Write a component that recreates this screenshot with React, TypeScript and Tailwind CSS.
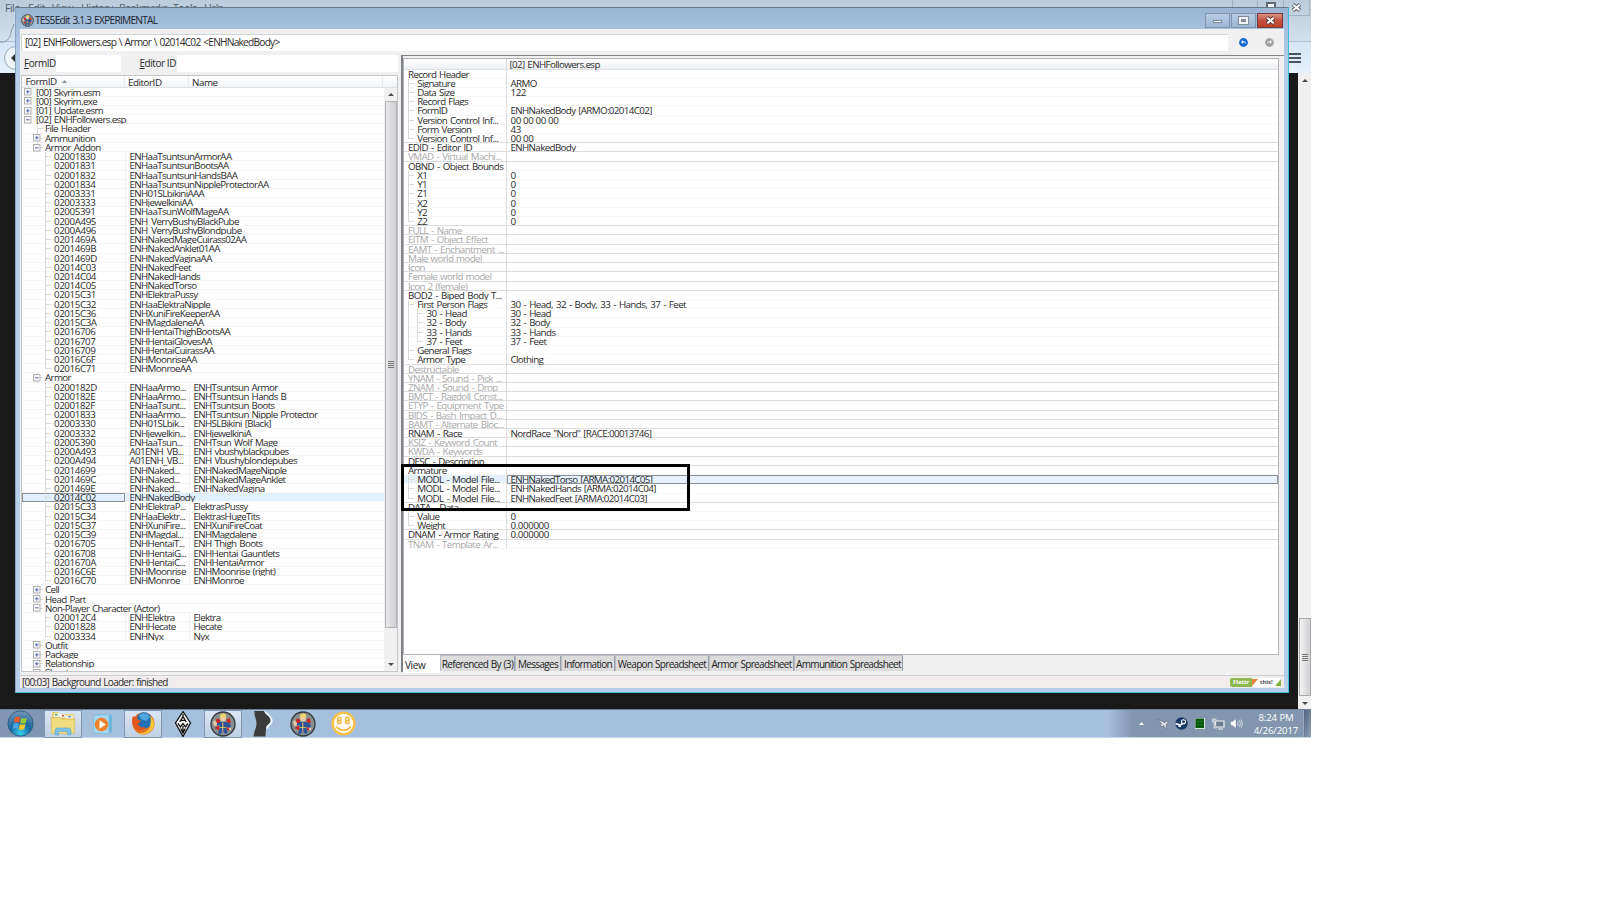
import type { ReactNode } from "react"

type TreeRow = {
  depth: number
  label: string
  box?: "plus" | "minus"
  editorId?: string
  name?: string
  last?: boolean
  selected?: boolean
}

type RecordRow = {
  depth: number
  label: string
  value?: string
  dim?: boolean
  rule?: boolean
  last?: boolean
  selected?: boolean
  // ancestor line keeps running to the left of this row
  outer?: boolean
}

const leaf = (
  label: string,
  editorId: string,
  name?: string,
  extra: Partial<TreeRow> = {},
): TreeRow => ({ depth: 2, label, editorId, name, ...extra })

const treeRows: TreeRow[] = [
  { depth: 0, label: "[00] Skyrim.esm", box: "plus" },
  { depth: 0, label: "[00] Skyrim.exe", box: "plus" },
  { depth: 0, label: "[01] Update.esm", box: "plus" },
  { depth: 0, label: "[02] ENHFollowers.esp", box: "minus" },
  { depth: 1, label: "File Header" },
  { depth: 1, label: "Ammunition", box: "plus" },
  { depth: 1, label: "Armor Addon", box: "minus" },
  leaf("02001830", "ENHaaTsuntsunArmorAA"),
  leaf("02001831", "ENHaaTsuntsunBootsAA"),
  leaf("02001832", "ENHaaTsuntsunHandsBAA"),
  leaf("02001834", "ENHaaTsuntsunNippleProtectorAA"),
  leaf("02003331", "ENH01SLbikiniAAA"),
  leaf("02003333", "ENHjewelkiniAA"),
  leaf("02005391", "ENHaaTsunWolfMageAA"),
  leaf("0200A495", "ENH_VerryBushyBlackPube"),
  leaf("0200A496", "ENH_VerryBushyBlondpube"),
  leaf("0201469A", "ENHNakedMageCuirass02AA"),
  leaf("0201469B", "ENHNakedAnklet01AA"),
  leaf("0201469D", "ENHNakedVaginaAA"),
  leaf("02014C03", "ENHNakedFeet"),
  leaf("02014C04", "ENHNakedHands"),
  leaf("02014C05", "ENHNakedTorso"),
  leaf("02015C31", "ENHElektraPussy"),
  leaf("02015C32", "ENHaaElektraNipple"),
  leaf("02015C36", "ENHXuniFireKeeperAA"),
  leaf("02015C3A", "ENHMagdaleneAA"),
  leaf("02016706", "ENHHentaiThighBootsAA"),
  leaf("02016707", "ENHHentaiGlovesAA"),
  leaf("02016709", "ENHHentaiCuirassAA"),
  leaf("02016C6F", "ENHMoonriseAA"),
  leaf("02016C71", "ENHMonroeAA", undefined, { last: true }),
  { depth: 1, label: "Armor", box: "minus" },
  leaf("0200182D", "ENHaaArmo...", "ENHTsuntsun Armor"),
  leaf("0200182E", "ENHaaArmo...", "ENHTsuntsun Hands B"),
  leaf("0200182F", "ENHaaTsunt...", "ENHTsuntsun Boots"),
  leaf("02001833", "ENHaaArmo...", "ENHTsuntsun Nipple Protector"),
  leaf("02003330", "ENH01SLbik...", "ENHSLBikini [Black]"),
  leaf("02003332", "ENHjewelkin...", "ENHjewelkiniA"),
  leaf("02005390", "ENHaaTsun...", "ENHTsun Wolf Mage"),
  leaf("0200A493", "A01ENH_VB...", "ENH vbushyblackpubes"),
  leaf("0200A494", "A01ENH_VB...", "ENH Vbushyblondepubes"),
  leaf("02014699", "ENHNaked...", "ENHNakedMageNipple"),
  leaf("0201469C", "ENHNaked...", "ENHNakedMageAnklet"),
  leaf("0201469E", "ENHNaked...", "ENHNakedVagina"),
  leaf("02014C02", "ENHNakedBody", undefined, { selected: true }),
  leaf("02015C33", "ENHElektraP...", "ElektrasPussy"),
  leaf("02015C34", "ENHaaElektr...", "ElektrasHugeTits"),
  leaf("02015C37", "ENHXuniFire...", "ENHXuniFireCoat"),
  leaf("02015C39", "ENHMagdal...", "ENHMagdalene"),
  leaf("02016705", "ENHHentaiT...", "ENH Thigh Boots"),
  leaf("02016708", "ENHHentaiG...", "ENHHentai Gauntlets"),
  leaf("0201670A", "ENHHentaiC...", "ENHHentaiArmor"),
  leaf("02016C6E", "ENHMoonrise", "ENHMoonrise (right)"),
  leaf("02016C70", "ENHMonroe", "ENHMonroe", { last: true }),
  { depth: 1, label: "Cell", box: "plus" },
  { depth: 1, label: "Head Part", box: "plus" },
  { depth: 1, label: "Non-Player Character (Actor)", box: "minus" },
  leaf("020012C4", "ENHElektra", "Elektra"),
  leaf("02001828", "ENHHecate", "Hecate"),
  leaf("02003334", "ENHNyx", "Nyx", { last: true }),
  { depth: 1, label: "Outfit", box: "plus" },
  { depth: 1, label: "Package", box: "plus" },
  { depth: 1, label: "Relationship", box: "plus" },
  { depth: 1, label: "Shout", box: "plus" },
]

const recordRows: RecordRow[] = [
  { depth: 0, label: "Record Header" },
  { depth: 1, label: "Signature", value: "ARMO" },
  { depth: 1, label: "Data Size", value: "122" },
  { depth: 1, label: "Record Flags" },
  { depth: 1, label: "FormID", value: "ENHNakedBody [ARMO:02014C02]" },
  { depth: 1, label: "Version Control Inf...", value: "00 00 00 00" },
  { depth: 1, label: "Form Version", value: "43" },
  { depth: 1, label: "Version Control Inf...", value: "00 00", last: true, rule: true },
  { depth: 0, label: "EDID - Editor ID", value: "ENHNakedBody", rule: true },
  { depth: 0, label: "VMAD - Virtual Machi...", dim: true, rule: true },
  { depth: 0, label: "OBND - Object Bounds" },
  { depth: 1, label: "X1", value: "0" },
  { depth: 1, label: "Y1", value: "0" },
  { depth: 1, label: "Z1", value: "0" },
  { depth: 1, label: "X2", value: "0" },
  { depth: 1, label: "Y2", value: "0" },
  { depth: 1, label: "Z2", value: "0", last: true, rule: true },
  { depth: 0, label: "FULL - Name", dim: true, rule: true },
  { depth: 0, label: "EITM - Object Effect", dim: true, rule: true },
  { depth: 0, label: "EAMT - Enchantment ...", dim: true, rule: true },
  { depth: 0, label: "Male world model", dim: true, rule: true },
  { depth: 0, label: "Icon", dim: true, rule: true },
  { depth: 0, label: "Female world model", dim: true, rule: true },
  { depth: 0, label: "Icon 2 (female)", dim: true, rule: true },
  { depth: 0, label: "BOD2 - Biped Body T..." },
  { depth: 1, label: "First Person Flags", value: "30 - Head, 32 - Body, 33 - Hands, 37 - Feet" },
  { depth: 2, label: "30 - Head", value: "30 - Head", outer: true },
  { depth: 2, label: "32 - Body", value: "32 - Body", outer: true },
  { depth: 2, label: "33 - Hands", value: "33 - Hands", outer: true },
  { depth: 2, label: "37 - Feet", value: "37 - Feet", outer: true, last: true },
  { depth: 1, label: "General Flags" },
  { depth: 1, label: "Armor Type", value: "Clothing", last: true, rule: true },
  { depth: 0, label: "Destructable", dim: true, rule: true },
  { depth: 0, label: "YNAM - Sound - Pick ...", dim: true, rule: true },
  { depth: 0, label: "ZNAM - Sound - Drop", dim: true, rule: true },
  { depth: 0, label: "BMCT - Ragdoll Const...", dim: true, rule: true },
  { depth: 0, label: "ETYP - Equipment Type", dim: true, rule: true },
  { depth: 0, label: "BIDS - Bash Impact D...", dim: true, rule: true },
  { depth: 0, label: "BAMT - Alternate Bloc...", dim: true, rule: true },
  { depth: 0, label: "RNAM - Race", value: 'NordRace "Nord" [RACE:00013746]', rule: true },
  { depth: 0, label: "KSIZ - Keyword Count", dim: true, rule: true },
  { depth: 0, label: "KWDA - Keywords", dim: true, rule: true },
  { depth: 0, label: "DESC - Description", rule: true },
  { depth: 0, label: "Armature" },
  { depth: 1, label: "MODL - Model File...", value: "ENHNakedTorso [ARMA:02014C05]", selected: true },
  { depth: 1, label: "MODL - Model File...", value: "ENHNakedHands [ARMA:02014C04]" },
  { depth: 1, label: "MODL - Model File...", value: "ENHNakedFeet [ARMA:02014C03]", last: true, rule: true },
  { depth: 0, label: "DATA - Data" },
  { depth: 1, label: "Value", value: "0" },
  { depth: 1, label: "Weight", value: "0.000000", last: true, rule: true },
  { depth: 0, label: "DNAM - Armor Rating", value: "0.000000", rule: true },
  { depth: 0, label: "TNAM - Template Ar...", dim: true },
]

const tabs = [
  { label: "Referenced By (3)", width: "w-[75px]" },
  { label: "Messages", width: "w-[46px]" },
  { label: "Information", width: "w-[54px]" },
  { label: "Weapon Spreadsheet", width: "w-[94px]" },
  { label: "Armor Spreadsheet", width: "w-[85px]" },
  { label: "Ammunition Spreadsheet", width: "w-[109px]" },
]

// Numbers sit wider than words, dashes need a little air around them
function CellText({ text }: { text: string }) {
  let spacing = "tracking-[-0.640px] [word-spacing:0.9px]"
  if (/^[0-9A-F. ]+$/.test(text)) spacing = "tracking-[-0.42px]"
  else if (text.includes(" - ")) spacing = "tracking-[-0.6px] [word-spacing:1.1px]"
  return <span className={`whitespace-pre ${spacing}`}>{text}</span>
}

function Elbow({ last }: { last?: boolean }) {
  return (
    <span className="relative block h-full w-[9.2px] shrink-0">
      <span
        className={`absolute top-0 left-0 w-px bg-[#d9d9d9] ${last ? "h-[5px]" : "h-full"}`}
      />
      <span className="absolute top-[4px] left-0 h-px w-[6px] bg-[#d9d9d9]" />
    </span>
  )
}

function ExpandBox({ kind }: { kind: "plus" | "minus" }) {
  return (
    <svg className="relative block h-[8px] w-[8px] shrink-0" viewBox="0 0 8 8">
      <rect x="0.5" y="0.5" width="6.5" height="6.5" fill="#f8f8f8" stroke="#b0b0b0" />
      <path d="M2 3.8h3.6" stroke="#5a6db2" />
      {kind === "plus" && <path d="M3.8 2v3.6" stroke="#5a6db2" />}
    </svg>
  )
}

function TreeLine({ row }: { row: TreeRow }) {
  return (
    <div
      className={`flex h-[9.225px] shrink-0 overflow-hidden leading-[9px] shadow-[inset_0_-1px_0_#f6f6f6] ${row.selected ? "bg-[#e2f0fd]" : ""}`}
    >
      <div
        className={`flex h-full w-[103px] shrink-0 pl-[2px] ${row.selected ? "outline-1 -outline-offset-1 outline-[#8a8f98]" : ""}`}
      >
        {row.depth === 0 && (
          <span className="flex h-full w-[12px] shrink-0 items-center">
            <ExpandBox kind={row.box ?? "plus"} />
          </span>
        )}
        {row.depth === 1 && (
          <span className="relative flex h-full w-[21px] shrink-0 items-center pl-[9px]">
            <span className="absolute top-0 left-[13px] h-full w-px bg-[#dedede]" />
            <span className="absolute top-[4px] left-[13px] h-px w-[6px] bg-[#d9d9d9]" />
            {row.box && <ExpandBox kind={row.box} />}
          </span>
        )}
        {row.depth === 2 && (
          <span className="flex h-full w-[30px] shrink-0">
            <span className="ml-[13px] h-full w-px bg-[#dedede]" />
            <span className="ml-[8px] flex h-full">
              <Elbow last={row.last} />
            </span>
          </span>
        )}
        <CellText text={row.label} />
      </div>
      {row.editorId && (
        <div className="w-[64px] shrink-0 border-l border-[#f1f1f1] pl-[3.5px] whitespace-nowrap">
          <CellText text={row.editorId} />
        </div>
      )}
      {row.name && (
        <div className="border-l border-[#f1f1f1] pl-[3.5px] whitespace-nowrap">
          <CellText text={row.name} />
        </div>
      )}
    </div>
  )
}

function RecordLine({ row }: { row: RecordRow }) {
  return (
    <div
      className={`flex h-[9.22px] shrink-0 overflow-hidden leading-[9px] ${row.rule ? "shadow-[inset_0_-1px_0_#dcdcdc]" : "shadow-[inset_0_-1px_0_#f8f8f8]"} ${row.dim ? "text-[#a9a9a9]" : ""} ${row.selected ? "bg-[#e6f1fc]" : ""}`}
    >
      <div className="flex h-full w-[103px] shrink-0 overflow-hidden border-r border-[#dedede] pl-[4px] whitespace-nowrap">
        {row.outer && <span className="mr-[8.2px] h-full w-px shrink-0 bg-[#d9d9d9]" />}
        {row.depth > 0 && <Elbow last={row.last} />}
        <CellText text={row.label} />
      </div>
      <div
        className={`flex-1 pl-[3.5px] whitespace-nowrap ${row.selected ? "outline-1 -outline-offset-1 outline-[#8a8f98]" : ""}`}
      >
        {row.value && <CellText text={row.value} />}
      </div>
    </div>
  )
}

function Grip() {
  return (
    <span className="flex flex-col gap-px">
      <span className="h-px w-[6px] bg-[#777]" />
      <span className="h-px w-[6px] bg-[#777]" />
      <span className="h-px w-[6px] bg-[#777]" />
      <span className="h-px w-[6px] bg-[#777]" />
    </span>
  )
}

function Arrow({ up }: { up?: boolean }) {
  return (
    <svg className="h-[3px] w-[6px]" viewBox="0 0 6 3">
      <path d={up ? "M0 3 3 0 6 3Z" : "M0 0h6L3 3Z"} fill="#4c4c4c" />
    </svg>
  )
}

function VaultIcon({ className }: { className: string }) {
  return (
    <svg className={className} viewBox="0 0 26 26">
      <circle cx="13" cy="13" r="12" fill="#878e90" stroke="#33393b" strokeWidth="1.3" />
      <path d="M6.500 7.500l3.500 1v4.500l-4-.5zM19.500 7l-3 1.500 1 4 3.500-1zM4.500 17l4.500-2.500.5 5zM21.500 17.500l-4-3-.5 5.500z" fill="#d0221d" />
      <path d="M10 11h6l4 1.500 1 4-2 .8-1.800-2.300-.9 1.500 1.200 6h-3l-1.700-4-2 4.500H8l2-7-.5-2.500-3 1.200-.8-2z" fill="#2a559c" />
      <path d="M12.800 11.500v8M10.200 16.500h5.300" stroke="#e8c552" strokeWidth="1" />
      <path d="M3 11l1.600-2 1.300 2.200 1.200.3-.2 3-2.700.5z" fill="#e9c9a0" />
      <circle cx="13" cy="7.600" r="2.900" fill="#ecca9f" />
      <path d="M9.800 6.800C9.400 3.800 11.500 2.300 13.600 2.600c2.200.1 3.200 1.900 2.500 3.800-1.800-.9-4.200-.9-6.300.4z" fill="#ecd768" />
      <circle cx="20" cy="17.800" r="1.300" fill="#e9c9a0" />
    </svg>
  )
}

function TaskButton({ children, active }: { children: ReactNode; active?: boolean }) {
  return (
    <div
      className={`flex h-[28px] w-[38px] shrink-0 items-center justify-center ${active ? "border border-[#8297b2] bg-linear-to-b from-[#dbe6f3] to-[#bfd0e5]" : ""}`}
    >
      {children}
    </div>
  )
}

function StartOrb() {
  return (
    <svg className="h-[27px] w-[27px]" viewBox="0 0 27 27">
      <defs>
        <radialGradient id="orb" cx="0.5" cy="0.9" r="0.85">
          <stop offset="0" stopColor="#35d2ef" />
          <stop offset="0.5" stopColor="#17679c" />
          <stop offset="1" stopColor="#6d93b4" />
        </radialGradient>
      </defs>
      <circle cx="13.5" cy="13.5" r="12.6" fill="url(#orb)" stroke="#265577" strokeWidth="0.8" />
      <path d="M8 7.500c2-1.200 3.800-1 5.300-.2l-1.200 5.400c-1.700-.9-3.500-.9-5.300.1z" fill="#ee5a26" />
      <path d="M14.300 7.700c1.800.9 3.600.9 5.700 0l-1.300 5.300c-2 .9-3.800.8-5.600-.1z" fill="#9bc93c" />
      <path d="M6.600 13.800c1.800-1 3.500-1 5.300-.2l-1.200 5.200c-1.700-.8-3.500-.8-5.200.1z" fill="#4aa5e4" />
      <path d="M12.900 14c1.800.9 3.600.9 5.600.1l-1.300 5.200c-1.900.9-3.700.8-5.500-.1z" fill="#fcc52e" />
    </svg>
  )
}

function FolderIcon() {
  return (
    <svg className="h-[25px] w-[26px]" viewBox="0 0 26 25">
      <path d="M2 4V2q0-1 1-1h5l1 2h14q1 0 1 1v17H2z" fill="#e9cf75" />
      <path d="M4 2.500h7v4H4z" fill="#f4f6ee" />
      <path d="M5 3h2.500v1.500H5z" fill="#49a35c" />
      <path d="M10 3.500h6v3h-6z" fill="#f4f6ee" />
      <path d="M12 4h2v1.500h-2z" fill="#d8473c" />
      <path d="M16 4.500h7v3h-7z" fill="#f4f6ee" />
      <path d="M18 5h3v1.300h-3z" fill="#4a8fd0" />
      <path d="M1 6.500h9l2 1.500h13l-.6 14.500H1.600z" fill="#f2dc80" stroke="#d0b052" strokeWidth="0.6" />
      <path d="M5 24v-4q0-3 2.500-3h11q2.500 0 2.500 3v4h-3.500v-3.500h-9V24z" fill="#7cc2e8" stroke="#4f9cca" strokeWidth="0.5" />
    </svg>
  )
}

function PlayerIcon() {
  return (
    <svg className="h-[22px] w-[22px]" viewBox="0 0 22 22">
      <path d="M5 1l15 1v17l-4 2z" fill="#6fb7dc" />
      <path d="M1.500 2.500 17 1v20l-15.500-1z" fill="#a4d6ef" stroke="#75b6d8" strokeWidth="0.7" />
      <circle cx="9.500" cy="11.500" r="6.700" fill="#f0802a" />
      <path d="M7.500 7.300l6.300 4.200-6.300 4.200z" fill="#fff" />
    </svg>
  )
}

function FirefoxIcon() {
  return (
    <svg className="h-[25px] w-[25px]" viewBox="0 0 25 25">
      <circle cx="12.5" cy="12.5" r="11" fill="#e8711c" />
      <circle cx="13" cy="9.500" r="8.300" fill="#2470b5" />
      <path d="M8 4c4-3 9-2 11 2l-4 4-5-2z" fill="#51a7dc" />
      <path d="M2 5l2 1 3-1-1 3 4 2-3 3c1 3 4 4 7 3-1 4-6 5-9 2-4-3-5-8-3-13z" fill="#e2571c" />
      <path d="M19 5c5 4 6 11 1 15-4 4-10 4-13 2 6 1 11-2 12-7 1-4 1-7 0-10z" fill="#f6c43b" />
    </svg>
  )
}

function DiamondIcon() {
  return (
    <svg className="h-[26px] w-[18px]" viewBox="0 0 18 26">
      <path d="M9 .5 16.500 12 9 25.500 1.500 12z" fill="#f4f4f4" stroke="#111" strokeWidth="1.300" />
      <path
        d="M9 3v2.500L5.800 11M9 5.500l3.200 5.500M7 9.300h4M4 12.500l2.500 3.500L9 12.500l2.500 3.500 2.500-3.500M6.700 17.500 9 22l2.300-4.500M9 15v6"
        fill="none"
        stroke="#111"
        strokeWidth="1.300"
      />
    </svg>
  )
}

function SilhouetteIcon() {
  return (
    <svg className="h-[26px] w-[24px]" viewBox="0 0 24 26">
      <path d="M13 .5C15 3 20 5 20.500 9.500c.5 4-4 3.500-4.500 8" fill="none" stroke="#f4f8fc" strokeWidth="2.200" />
      <path d="M3.500 0H13c1 4 6.500 5 6.500 9.500 0 3.500-4 4-4.500 7.500l-.5 8.500H2.500C3 20 5.500 17 5.500 12.500 5.500 8 3 5 3.500 0z" fill="#3b3b3b" />
    </svg>
  )
}

function SmileIcon() {
  return (
    <svg className="h-[25px] w-[25px]" viewBox="0 0 25 25">
      <circle cx="12.5" cy="12.5" r="10.900" fill="#fffdf4" stroke="#f9c044" strokeWidth="2.400" />
      <g fill="none" stroke="#f4b63a" strokeWidth="1.300">
        <rect x="6.500" y="6.500" width="3.600" height="3" rx="1" />
        <rect x="6.500" y="9.500" width="3.600" height="3" rx="1" />
        <rect x="14.500" y="6.500" width="3.600" height="3" rx="1" />
        <rect x="14.500" y="9.500" width="3.600" height="3" rx="1" />
        <path d="M5.500 15.500c3 5 11 5 14 0" strokeWidth="1.700" />
      </g>
    </svg>
  )
}

function Tray() {
  return (
    <div className="flex h-full w-[203px] items-center bg-linear-to-r from-[#a6bfdc] via-[#8396b0] via-12% to-[#8396b0]">
      <svg className="ml-[31px] h-[3px] w-[5px]" viewBox="0 0 5 3">
        <path d="M0 3 2.500 0 5 3Z" fill="#fff" />
      </svg>
      <svg className="ml-[13px] h-[12px] w-[12px]" viewBox="0 0 12 12">
        <path d="M.5 1.500 4.500 3 7 4.500 10 3.500l1.500 1-2.500 2 1 4-1.500-.5-2-2.500-2.500 1.500-.5-1.500L4.500 5.500z" fill="#dfe1e3" stroke="#5f656d" strokeWidth="0.600" />
      </svg>
      <svg className="ml-[6px] h-[13px] w-[13px]" viewBox="0 0 13 13">
        <circle cx="6.500" cy="6.500" r="6.200" fill="#173a68" />
        <circle cx="8.500" cy="4.800" r="2" fill="#173a68" stroke="#fff" strokeWidth="1.100" />
        <path d="M.5 6.500 5 8l3-1.500" fill="none" stroke="#fff" strokeWidth="1.800" />
        <circle cx="4.700" cy="8.700" r="1.500" fill="#dfe7f0" />
      </svg>
      <svg className="ml-[7px] h-[11px] w-[10px]" viewBox="0 0 10 11">
        <path d="M0 0h10v11H0z" fill="#d8e4d8" />
        <path d="M.5 .5h8.500v9.500H.5z" fill="#0a4d10" />
        <path d="M.5 3.500H9M.5 6.800H9M3.300.5v9.500M6.200.5v9.500" stroke="#12801c" strokeWidth="0.700" />
      </svg>
      <svg className="ml-[7px] h-[12px] w-[13px]" viewBox="0 0 13 12">
        <path d="M3.500 3h8.500v6H3.500zM6 11h5" fill="#6f8092" stroke="#eef1f4" strokeWidth="1.200" />
        <path d="M.5 1h3.500v3H.5zM2 4v6h3" fill="#b7c0c9" stroke="#e3e7eb" strokeWidth="0.700" />
      </svg>
      <svg className="ml-[5px] h-[11px] w-[13px]" viewBox="0 0 13 11">
        <path d="M.5 3.500h2L6 .5v10L2.500 7.500h-2z" fill="#fff" stroke="#667" strokeWidth="0.400" />
        <path d="M7.500 3.500q1.500 2 0 4M9.300 2.200q2.500 3.300 0 6.600M11 1.500q3 4 0 8" fill="none" stroke="#e6ebf1" strokeWidth="0.800" />
      </svg>
      <div className="ml-[10px] w-[46px] pt-px text-center text-[9.6px] leading-[13.500px] tracking-[-0.1px] whitespace-nowrap text-white">
        <div>8:24 PM</div>
        <div>4/26/2017</div>
      </div>
      <div className="ml-auto h-full w-[8px] border-l border-[#9aaabf] bg-linear-to-br from-[#4f637c] to-[#8fa3bd]" />
    </div>
  )
}

function Taskbar() {
  return (
    <div className="flex h-[29px] shrink-0 items-stretch border-t border-b border-t-[#6f7f93] border-b-[#c6d6e9] bg-[#a6bfdc]">
      <div className="flex w-[44px] items-center justify-center bg-[#8196b2] pr-[3px]">
        <StartOrb />
      </div>
      <div className="flex items-center gap-[2px]">
        <TaskButton active><FolderIcon /></TaskButton>
        <TaskButton><PlayerIcon /></TaskButton>
        <TaskButton active><FirefoxIcon /></TaskButton>
        <TaskButton><DiamondIcon /></TaskButton>
        <TaskButton active><VaultIcon className="h-[26px] w-[26px]" /></TaskButton>
        <TaskButton><SilhouetteIcon /></TaskButton>
        <TaskButton><VaultIcon className="h-[26px] w-[26px]" /></TaskButton>
        <TaskButton><SmileIcon /></TaskButton>
      </div>
      <div className="ml-auto">
        <Tray />
      </div>
    </div>
  )
}

function Browser() {
  return (
    <div className="flex h-[709px] flex-col">
      <div className="flex h-[41px] shrink-0 items-start justify-between bg-linear-to-b from-[#bccbd9] to-[#d3e0ee] pl-[5px] text-[10.500px] leading-[16px] tracking-[-0.5px] text-[#525d68]">
        <div className="flex">
          <span className="w-[23px]">File</span>
          <span className="w-[24px]">Edit</span>
          <span className="w-[29px]">View</span>
          <span className="w-[38px]">History</span>
          <span className="w-[54px] tracking-[-0.8px]">Bookmarks</span>
          <span className="w-[31px]">Tools</span>
          <span className="tracking-[-0.9px]">Help</span>
        </div>
        <div className="mr-px flex h-[16px] border border-t-0 border-[#a3b1c0]">
          <span className="w-[25px] border-r border-[#a3b1c0]" />
          <span className="w-[26px] border-r border-[#a3b1c0] pt-[2px] pl-[8px]">
            <span className="block h-[9px] w-[10px] border-2 border-[#606a74] bg-white" />
          </span>
          <span className="flex w-[25px] items-center justify-center">
            <CloseGlyph dark />
          </span>
        </div>
      </div>
      <div className="flex h-[32px] shrink-0 items-center justify-between border-t border-[#b4c3d2] bg-linear-to-b from-[#d6e6f7] to-[#e6f1fb]">
        <svg className="h-[32px] w-[15px] overflow-visible" viewBox="0 0 15 32">
          <path d="M0 0C6 1 10-3 11-10l3-8" fill="none" stroke="#8797a6" />
          <circle cx="16" cy="16" r="11.500" fill="#edf3f9" stroke="#98a8b8" />
          <path d="M11 16l4-4v8z" fill="#333" />
        </svg>
        <div className="mr-[10px] flex flex-col gap-[2px]">
          <span className="h-[2px] w-[13px] bg-[#4c5661]" />
          <span className="h-[2px] w-[13px] bg-[#4c5661]" />
          <span className="h-[2px] w-[13px] bg-[#4c5661]" />
        </div>
      </div>
      <div className="flex flex-1 justify-end bg-[#191919]">
        <div className="flex w-[13px] flex-col items-center bg-[#f0f0f0] pt-[6px] pb-[4px]">
          <Arrow up />
          <div className="mt-auto mb-[6px] flex h-[78px] w-[12px] items-center justify-center border border-[#a9a9a9] bg-linear-to-r from-[#f4f4f4] to-[#cfcfd3]">
            <Grip />
          </div>
          <Arrow />
        </div>
      </div>
    </div>
  )
}

function CloseGlyph({ dark }: { dark?: boolean }) {
  return (
    <svg className="h-[9px] w-[11px]" viewBox="0 0 11 9">
      <path d="M2 1.500l7 6M9 1.500l-7 6" stroke={dark ? "#59636e" : "#5b3a38"} strokeWidth="3.800" />
      <path d="M2.300 1.800l6.400 5.400M8.700 1.800l-6.400 5.400" stroke="#fff" strokeWidth="2" />
    </svg>
  )
}

function TitleBar() {
  return (
    <div className="flex h-[21px] shrink-0 items-start justify-between pr-[1px]">
      <div className="flex items-center pt-[5px] pl-px text-[#1c2530]">
        <VaultIcon className="h-[13px] w-[13px]" />
        <span className="ml-px text-[10.200px] leading-[15px] tracking-[-0.760px] [word-spacing:0.8px]">
          TES5Edit 3.1.3 EXPERIMENTAL
        </span>
      </div>
      <div className="mt-[5px] flex h-[15px] gap-px">
        <span className="flex w-[25px] items-center justify-center border border-[#7f94b0] bg-linear-to-b from-[#b9cce2] to-[#9db6d4]">
          <span className="mt-[2px] h-[3px] w-[9px] border border-[#7f8b99] bg-white" />
        </span>
        <span className="flex w-[25px] items-center justify-center border border-[#7f94b0] bg-linear-to-b from-[#b9cce2] to-[#9db6d4]">
          <span className="h-[7px] w-[9px] border-2 border-[#f3f3f3] bg-[#7f8b99] outline-1 outline-[#7f8b99]" />
        </span>
        <span className="flex w-[26px] items-center justify-center border border-[#7a3a38] bg-linear-to-b from-[#d98f83] via-[#c4523f] to-[#b8402a]">
          <CloseGlyph />
        </span>
      </div>
    </div>
  )
}

function NavPanel() {
  return (
    <div className="flex w-[378px] shrink-0 flex-col">
      <div className="flex h-[17px] shrink-0 items-stretch text-[10px] leading-[17px] tracking-[-0.450px]">
        <span className="w-[36px] pl-[4px] whitespace-nowrap"><u>F</u>ormID</span>
        <span className="w-[65px] bg-white" />
        <span className="w-[56px] pl-[18.500px] whitespace-nowrap"><u>E</u>ditor ID</span>
        <span className="flex-1 bg-white" />
      </div>
      <div className="mt-[3px] ml-px flex min-h-0 flex-1 flex-col border border-[#c3c7cd] bg-white">
        <div className="flex h-[11.600px] shrink-0 border-b border-[#dfe2e6] bg-linear-to-b from-white to-[#f1f3f5] leading-[13px] tracking-[-0.450px]">
          <span className="flex w-[103px] items-center gap-[5px] border-r border-[#e6e8ea] pl-[3.500px]">
            FormID
            <svg className="h-[3px] w-[5px]" viewBox="0 0 5 3">
              <path d="M0 3 2.500 0 5 3Z" fill="#8a8f94" />
            </svg>
          </span>
          <span className="w-[64px] border-r border-[#e6e8ea] pl-[3px]">EditorID</span>
          <span className="w-[194px] border-r border-[#e6e8ea] pl-[3px]">Name</span>
        </div>
        <div className="flex min-h-0 flex-1">
          <div className="flex flex-1 flex-col overflow-hidden">
            {treeRows.map((row) => (
              <TreeLine key={row.label} row={row} />
            ))}
          </div>
          <div className="flex w-[13px] shrink-0 flex-col items-center bg-[#f0f0f0] pt-[5px] pb-[5px]">
            <Arrow up />
            <div className="mt-[5px] flex h-[527px] w-[12px] items-center justify-center border border-[#b4b4b7] bg-linear-to-r from-[#e9e9eb] to-[#cdced2]">
              <Grip />
            </div>
            <div className="mt-auto">
              <Arrow />
            </div>
          </div>
        </div>
      </div>
    </div>
  )
}

function RecordPanel() {
  return (
    <div className="relative ml-[3px] flex flex-1 flex-col border-t border-l-2 border-[#808489]">
      <div className="mt-[2px] mr-[5px] flex h-[597px] shrink-0 flex-col border border-[#b2b4b8] bg-white">
        <div className="flex h-[10.500px] shrink-0 border-b border-[#e0e3e6] bg-linear-to-b from-white to-[#eef0f3] leading-[11px]">
          <span className="w-[103px] border-r border-[#e0e0e0]" />
          <span className="pl-[2.500px] tracking-[-0.620px] [word-spacing:0.8px]">[02] ENHFollowers.esp</span>
        </div>
        {recordRows.map((row, i) => (
          <RecordLine key={i} row={row} />
        ))}
      </div>
      <div className="flex h-[18px] shrink-0 items-start text-[10px] leading-[16px] tracking-[-0.690px] text-[#222] [word-spacing:0.8px]">
        <span className="h-[18px] w-[37px] bg-white pt-[2px] pl-[2px] tracking-[-0.4px]">View</span>
        {tabs.map((tab) => (
          <span
            key={tab.label}
            className={`h-[16px] shrink-0 border-t border-r border-l border-t-[#b8bcc4] border-r-[#9ba0a8] border-l-[#b8bcc4] bg-[#dcdcdc] text-center whitespace-nowrap ${tab.width}`}
          >
            {tab.label}
          </span>
        ))}
      </div>
      {/* marker frame over the armature rows */}
      <div className="absolute top-[408px] -left-[2px] h-[47px] w-[289px] border-3 border-black" />
    </div>
  )
}

function EditorWindow() {
  return (
    <div className="absolute top-[7px] left-[15px] flex h-[686px] w-[1274px] flex-col border border-t-[#68788a] border-r-[#3cc0dc] border-b-[#3cc0dc] border-l-[#8aa4c2] bg-linear-to-b from-[#9ab5d4] via-[#b6cee9] via-8% to-[#b6cee9] px-[4px] pb-[4px]">
      <TitleBar />
      <div className="flex min-h-0 flex-1 flex-col bg-[#f0f0f0]">
        <div className="flex h-[26px] shrink-0 items-center pt-[1px]">
          <div className="ml-px h-[17px] w-[1207px] border-t border-l border-[#cfd2d6] bg-white pl-[3px] text-[10.200px] leading-[15px] tracking-[-0.780px] [word-spacing:0.9px]">
            [02] ENHFollowers.esp \ Armor \ 02014C02 &lt;ENHNakedBody&gt;
          </div>
          <svg className="ml-[11px] h-[9px] w-[9px]" viewBox="0 0 9 9">
            <circle cx="4.5" cy="4.5" r="4.400" fill="#1769cf" />
            <path d="M2 4l2-2v1.300c2 0 3 .8 3 2.500-.8-.9-1.500-1.200-3-1.200V6z" fill="#e6f3ff" />
          </svg>
          <svg className="ml-[17px] h-[9px] w-[9px]" viewBox="0 0 9 9">
            <circle cx="4.5" cy="4.5" r="4.400" fill="#a2a2a2" />
            <path d="M7 4 5 2v1.300c-2 0-3 .8-3 2.500.8-.9 1.500-1.200 3-1.200V6z" fill="#eee" />
          </svg>
        </div>
        <div className="flex h-[617px] shrink-0">
          <NavPanel />
          <RecordPanel />
        </div>
        <div className="mt-[3px] flex flex-1 items-center justify-between border-t border-[#cfcfcf] bg-[#f1eded] pr-[3px] pl-[2px]">
          <span className="text-[10px] leading-[11px] tracking-[-0.720px] [word-spacing:0.9px]">[00:03] Background Loader: finished</span>
          <span className="flex h-[9px] w-[51px] items-center rounded-[2px] bg-white text-[6px] leading-[9px] font-bold tracking-[-0.1px]">
            <span className="h-full w-[22px] rounded-l-[2px] bg-[#8fb850] text-center text-white">Flattr</span>
            <svg className="h-[7px] w-[6px]" viewBox="0 0 6 7">
              <path d="M0 0h6L0 7z" fill="#ee8340" />
            </svg>
            <span className="ml-[2px] text-[#555]">this!</span>
            <svg className="ml-auto h-[7px] w-[6px]" viewBox="0 0 6 7">
              <path d="M6 0v7H0z" fill="#7fb340" />
            </svg>
          </span>
        </div>
      </div>
    </div>
  )
}

export default function App() {
  return (
    <div className="h-[900px] w-[1600px] overflow-hidden bg-white font-['Open_Sans','Noto_Sans',sans-serif] text-[9.800px] text-[#2b2b2b]">
      <div className="relative flex h-[738px] w-[1311px] flex-col">
        <Browser />
        <Taskbar />
        <EditorWindow />
      </div>
    </div>
  )
}
